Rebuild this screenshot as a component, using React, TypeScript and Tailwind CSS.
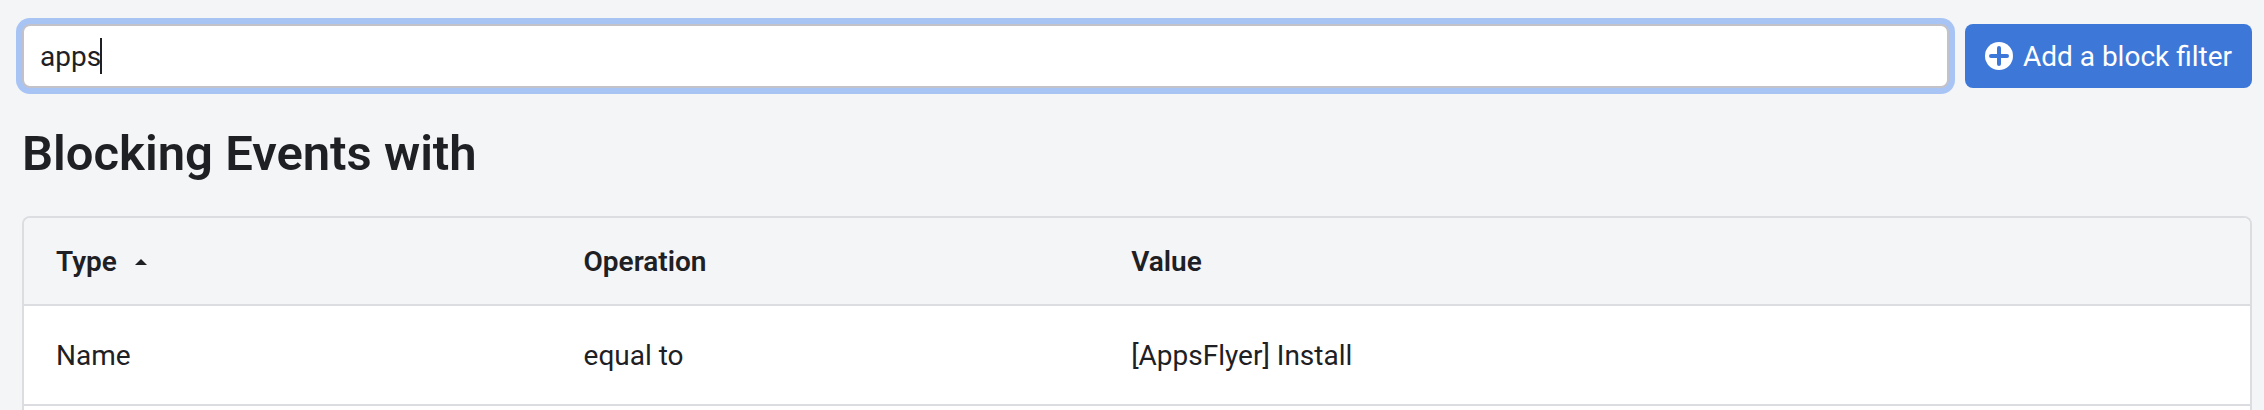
import { useState } from 'react';

interface BlockFilter {
  type: string;
  operation: string;
  value: string;
}

const filters: BlockFilter[] = [
  { type: 'Name', operation: 'equal to', value: '[AppsFlyer] Install' },
];

export default function App() {
  const [search, setSearch] = useState('apps');

  return (
    <div className="h-screen flex flex-col overflow-hidden bg-[#f3f5f7] pt-6 pl-[22px] pr-3 font-['Roboto','Noto_Sans',sans-serif] text-[28px] leading-9 text-[#1e2024]">
      <div className="flex items-stretch gap-4">
        <div className="relative flex-1">
          <input
            type="text"
            aria-label="Search block filters"
            value={search}
            onChange={(e) => setSearch(e.target.value)}
            className="w-full h-16 rounded-lg border-2 border-[#c3c2c8] bg-white px-4 caret-transparent outline-none ring-6 ring-[#a8c4f5]"
          />
          <span className="absolute left-[78px] top-3.5 h-9 w-0.5 bg-[#1e2024]" />
        </div>
        <button
          type="button"
          className="flex items-center gap-2.5 rounded-lg bg-[#3d78d8] px-5 text-white"
        >
          <svg className="size-7" viewBox="0 0 28 28" aria-hidden="true">
            <circle cx="14" cy="14" r="14" fill="currentColor" />
            <path d="M14 6v16M6 14h16" stroke="#3d78d8" strokeWidth="4" strokeLinecap="round" />
          </svg>
          <span className="pt-0.5">Add a block filter</span>
        </button>
      </div>

      <h1 className="mt-[38px] text-[49px] leading-14 font-semibold">Blocking Events with</h1>

      <div className="mt-[34px] flex-1 overflow-hidden rounded-t-lg border-2 border-b-0 border-[#dcdde1] bg-white">
        <table className="w-full table-fixed text-left">
          <thead className="bg-[#f3f5f7]">
            <tr className="h-[87px] border-b-2 border-[#dcdde1]">
              <th className="w-[23.7%] px-8 pt-0.5 font-semibold" aria-sort="ascending">
                <button type="button" className="flex items-center gap-[18px]">
                  Type
                  <svg className="w-3 h-1.5" viewBox="0 0 12 6" aria-hidden="true">
                    <path d="M0 6L6 0L12 6Z" fill="currentColor" />
                  </svg>
                </button>
              </th>
              <th className="w-[24.6%] px-8 pt-0.5 font-semibold">Operation</th>
              <th className="px-8 pt-0.5 font-semibold">Value</th>
            </tr>
          </thead>
          <tbody>
            {filters.map((filter) => (
              <tr key={filter.value} className="h-25 border-b-2 border-[#dcdde1]">
                <td className="px-8 pt-0.5">{filter.type}</td>
                <td className="px-8 pt-0.5">{filter.operation}</td>
                <td className="px-8 pt-0.5">{filter.value}</td>
              </tr>
            ))}
          </tbody>
        </table>
      </div>
    </div>
  );
}
